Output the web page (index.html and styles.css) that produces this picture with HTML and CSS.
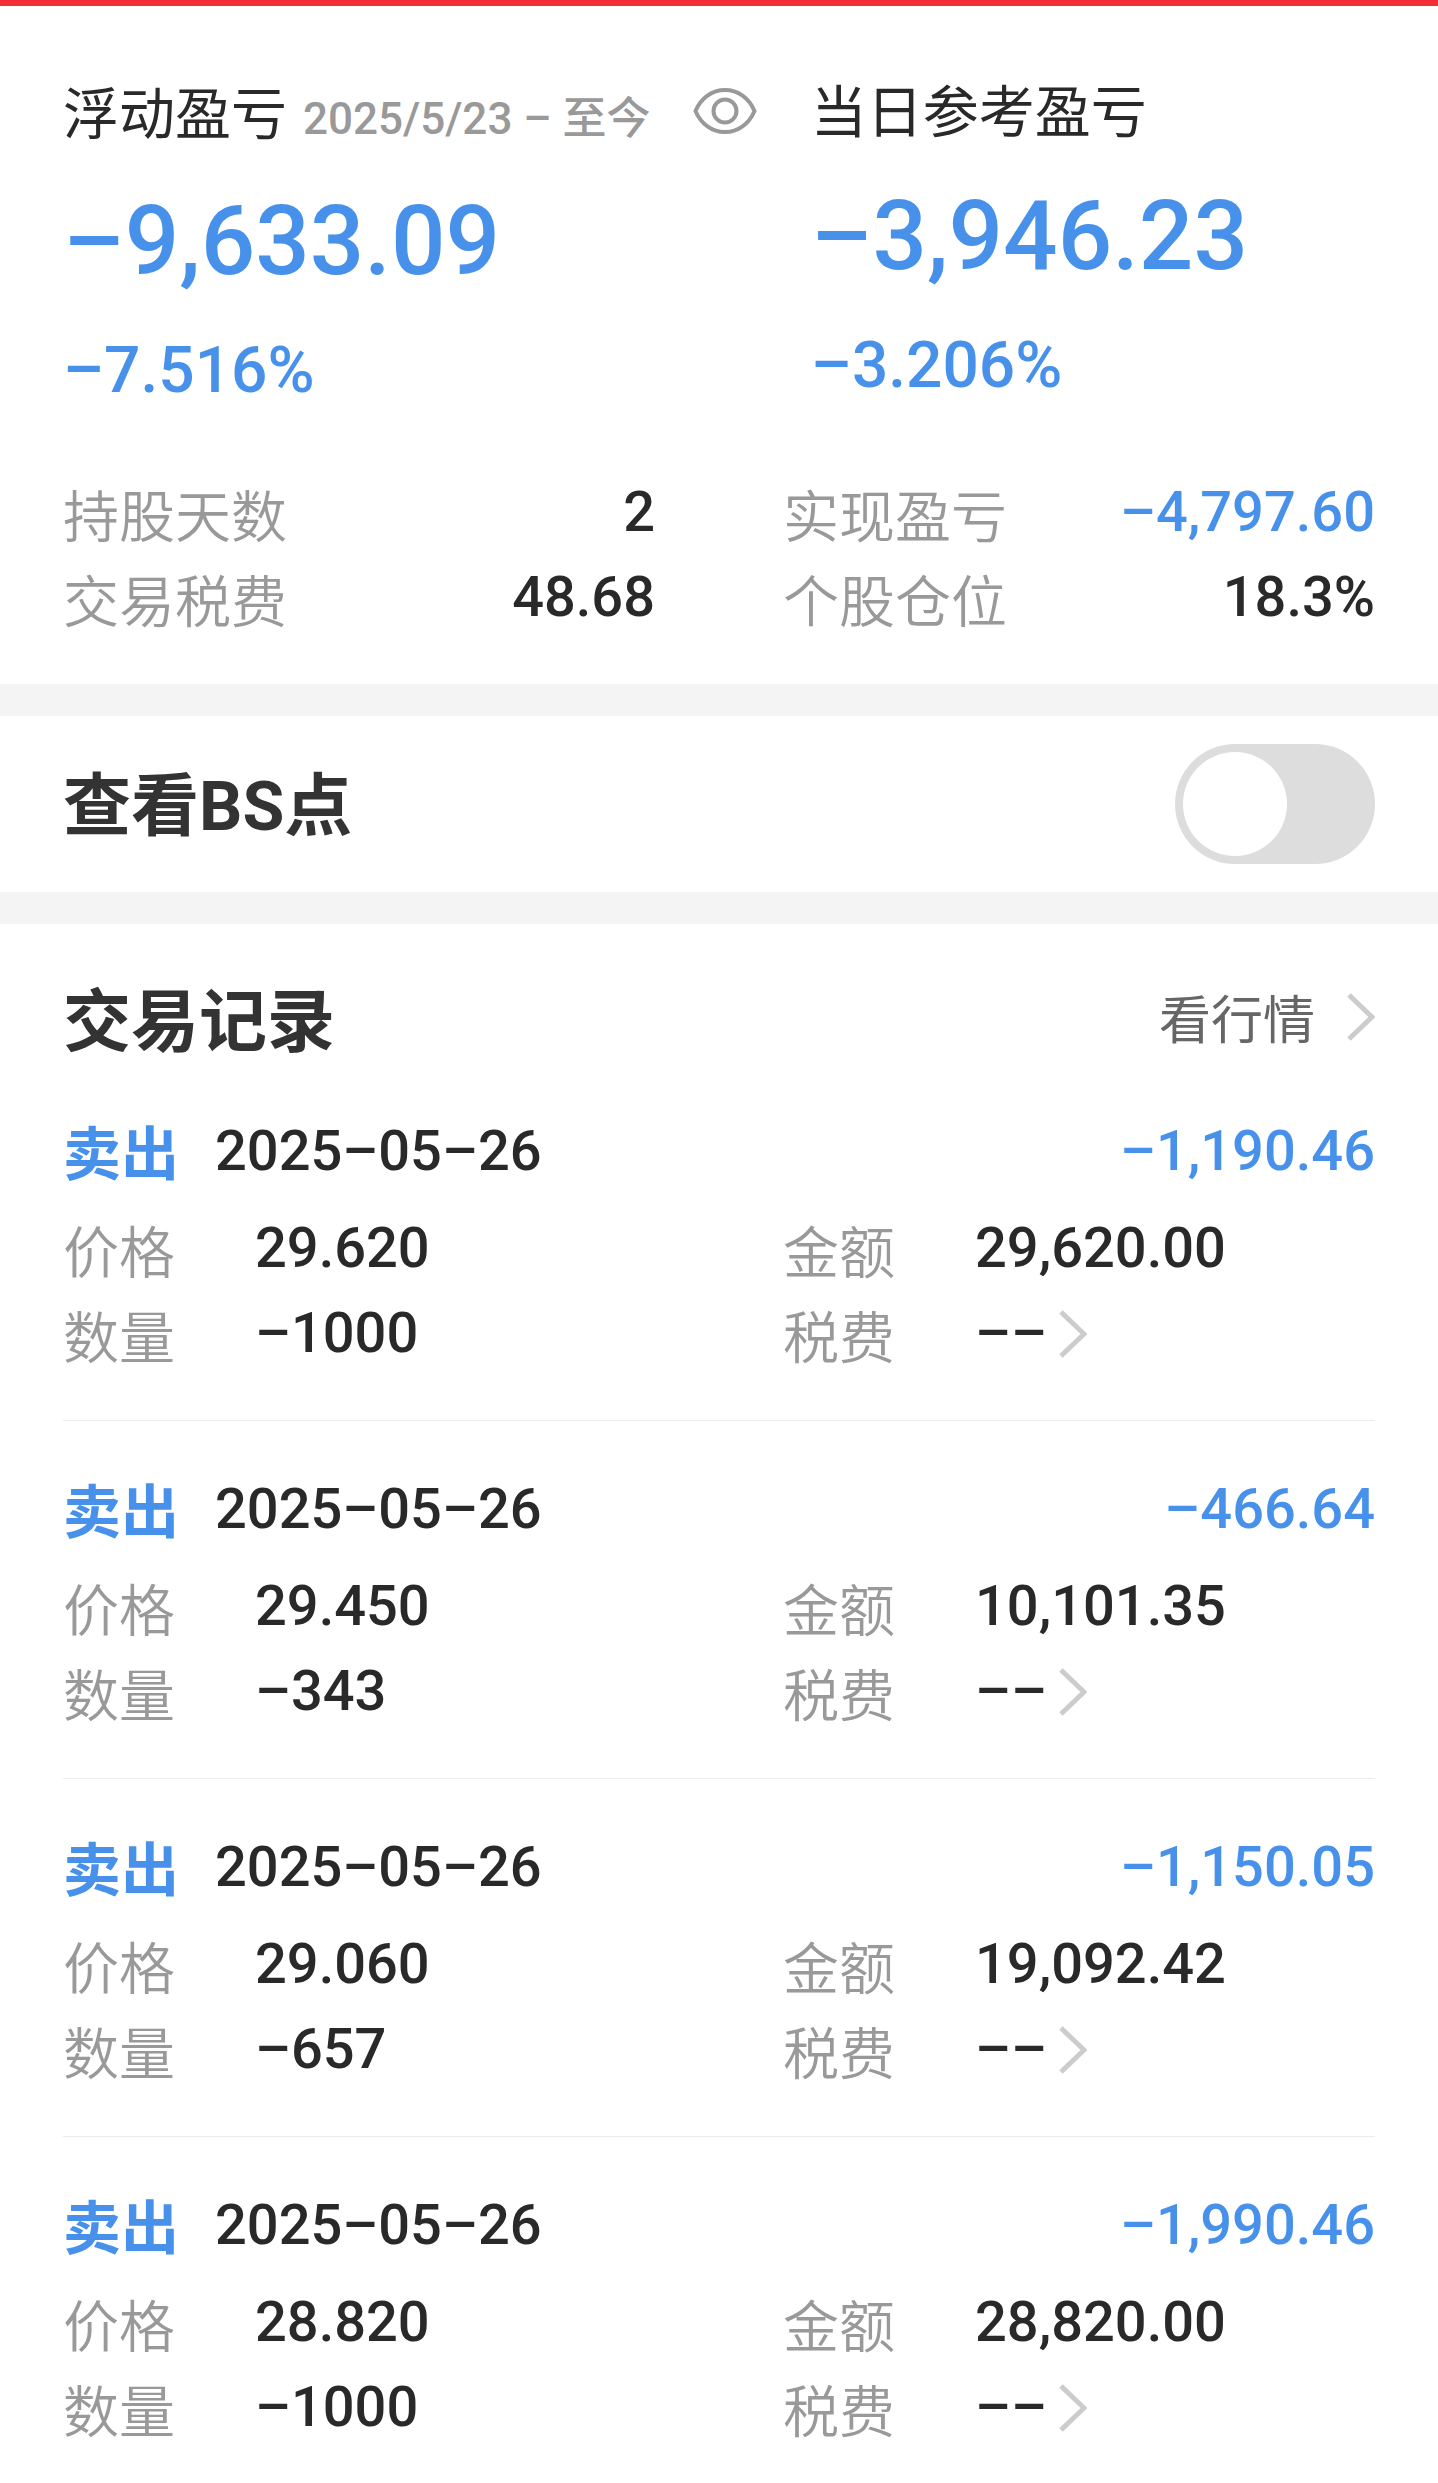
FILE: index.html
```html
<!DOCTYPE html>
<html lang="zh-CN">
<head>
  <meta charset="UTF-8" />
  <meta name="viewport" content="width=device-width, initial-scale=1.0" />
  <title>交易记录</title>
  <link rel="stylesheet" href="styles.css">
</head>
<body>
  <section class="summary">
    <div class="profits">
      <div class="profit">
        <div class="profit-title">
          <h2>浮动盈亏</h2>
          <span class="period">2025/5/23 – 至今</span>
          <button class="eye" type="button" aria-label="隐藏金额">
            <svg viewBox="0 0 64 48" width="64" height="48" fill="none" stroke="#999" stroke-width="4">
              <path d="M2.500 24C8 11 19 3 32 3s24 8 29.500 21C56 37 45 45 32 45S8 37 2.500 24z" />
              <circle cx="32" cy="24" r="11.500" />
            </svg>
          </button>
        </div>
        <p class="profit-value">–9,633.09</p>
        <p class="profit-rate">–7.516%</p>
      </div>
      <div class="profit today">
        <div class="profit-title">
          <h2>当日参考盈亏</h2>
        </div>
        <p class="profit-value">–3,946.23</p>
        <p class="profit-rate">–3.206%</p>
      </div>
    </div>
    <dl class="metrics">
      <div class="metric"><dt>持股天数</dt><dd>2</dd></div>
      <div class="metric"><dt>实现盈亏</dt><dd class="down">–4,797.60</dd></div>
      <div class="metric"><dt>交易税费</dt><dd>48.68</dd></div>
      <div class="metric"><dt>个股仓位</dt><dd>18.3%</dd></div>
    </dl>
  </section>

  <section class="bs-point">
    <label class="heading" for="bs-switch">查看<span class="latin">BS</span>点</label>
    <input class="switch" id="bs-switch" type="checkbox" role="switch">
  </section>

  <section class="records">
    <div class="records-header">
      <h2 class="heading">交易记录</h2>
      <a class="quote-link" href="#">看行情
        <svg class="arrow" viewBox="0 0 28 48"><path d="M2 2l23 22L2 46" /></svg>
      </a>
    </div>

    <article class="record">
      <div class="record-head">
        <span class="side">卖出</span>
        <time datetime="2025-05-26">2025–05–26</time>
        <span class="amount">–1,190.46</span>
      </div>
      <dl class="details">
        <div class="detail"><dt>价格</dt><dd>29.620</dd></div>
        <div class="detail"><dt>金额</dt><dd>29,620.00</dd></div>
        <div class="detail"><dt>数量</dt><dd>–1000</dd></div>
        <div class="detail"><dt>税费</dt><dd>––</dd>
          <button class="more" type="button" aria-label="税费明细"><svg class="arrow" viewBox="0 0 28 48"><path d="M2 2l23 22L2 46" /></svg></button>
        </div>
      </dl>
    </article>

    <article class="record">
      <div class="record-head">
        <span class="side">卖出</span>
        <time datetime="2025-05-26">2025–05–26</time>
        <span class="amount">–466.64</span>
      </div>
      <dl class="details">
        <div class="detail"><dt>价格</dt><dd>29.450</dd></div>
        <div class="detail"><dt>金额</dt><dd>10,101.35</dd></div>
        <div class="detail"><dt>数量</dt><dd>–343</dd></div>
        <div class="detail"><dt>税费</dt><dd>––</dd>
          <button class="more" type="button" aria-label="税费明细"><svg class="arrow" viewBox="0 0 28 48"><path d="M2 2l23 22L2 46" /></svg></button>
        </div>
      </dl>
    </article>

    <article class="record">
      <div class="record-head">
        <span class="side">卖出</span>
        <time datetime="2025-05-26">2025–05–26</time>
        <span class="amount">–1,150.05</span>
      </div>
      <dl class="details">
        <div class="detail"><dt>价格</dt><dd>29.060</dd></div>
        <div class="detail"><dt>金额</dt><dd>19,092.42</dd></div>
        <div class="detail"><dt>数量</dt><dd>–657</dd></div>
        <div class="detail"><dt>税费</dt><dd>––</dd>
          <button class="more" type="button" aria-label="税费明细"><svg class="arrow" viewBox="0 0 28 48"><path d="M2 2l23 22L2 46" /></svg></button>
        </div>
      </dl>
    </article>

    <article class="record">
      <div class="record-head">
        <span class="side">卖出</span>
        <time datetime="2025-05-26">2025–05–26</time>
        <span class="amount">–1,990.46</span>
      </div>
      <dl class="details">
        <div class="detail"><dt>价格</dt><dd>28.820</dd></div>
        <div class="detail"><dt>金额</dt><dd>28,820.00</dd></div>
        <div class="detail"><dt>数量</dt><dd>–1000</dd></div>
        <div class="detail"><dt>税费</dt><dd>––</dd>
          <button class="more" type="button" aria-label="税费明细"><svg class="arrow" viewBox="0 0 28 48"><path d="M2 2l23 22L2 46" /></svg></button>
        </div>
      </dl>
    </article>
  </section>
</body>
</html>
```

FILE: styles.css
```css
* {
  box-sizing: border-box;
}
body {
  margin: 0;
  font-family: "Noto Sans CJK SC", sans-serif;
  font-size: 56px;
  color: #292929;
  background: #fff;
  border-top: 6px solid #f12e38;
}
h2, p, dl, dd {
  margin: 0;
}
button {
  padding: 0;
  border: 0;
  background: none;
  cursor: pointer;
}
section {
  padding: 0 63px;
}
.heading {
  font-size: 68px;
  font-weight: bold;
  line-height: 92px;
  color: #333;
}
.period, .profit-value, .profit-rate, dd, time, .amount, .latin {
  font-family: Roboto, "Noto Sans CJK SC", sans-serif;
}
.period, .profit-value, .profit-rate, dd, time, .amount {
  font-weight: 500;
}

/* profit summary */
.summary {
  padding-top: 66px;
  padding-bottom: 44px;
}
.profits {
  display: grid;
  grid-template-columns: 57% 43%;
}
.profit-title {
  display: flex;
  align-items: baseline;
  line-height: 76px;
  white-space: nowrap;
}
.today .profit-title {
  line-height: 72px;
}
.profit-title h2 {
  font-size: 56px;
  font-weight: normal;
}
.period {
  margin-left: 16px;
  font-size: 44px;
  line-height: 60px;
  color: #999;
}
.eye {
  display: flex;
  align-self: center;
  margin-left: auto;
  margin-right: 54px;
}
.profit-value {
  margin-top: 32px;
  font-size: 96px;
  line-height: 120px;
  color: #4791eb;
}
.profit-rate {
  margin-top: 30px;
  font-size: 64px;
  line-height: 80px;
  color: #4791eb;
}

/* label and value pairs */
.metrics, .details {
  display: grid;
  grid-template-columns: 1fr 1fr;
  column-gap: 128px;
}
.metrics {
  margin-top: 59px;
}
.metric, .detail {
  display: flex;
  align-items: flex-start;
  line-height: 85px;
}
.metric {
  justify-content: space-between;
}
dt {
  font-weight: 350;
  color: #999;
}
.down {
  color: #4791eb;
}

/* BS switch */
.bs-point {
  display: flex;
  align-items: center;
  justify-content: space-between;
  height: 240px;
  border: solid #f4f4f4;
  border-width: 32px 0;
}
.switch {
  appearance: none;
  width: 200px;
  height: 120px;
  margin: 0;
  padding: 8px;
  border-radius: 60px;
  background: #ddd;
  cursor: pointer;
}
.switch::before {
  content: "";
  display: block;
  width: 104px;
  height: 104px;
  border-radius: 50%;
  background: #fff;
}
.switch:checked {
  background: #4791eb;
}
.switch:checked::before {
  margin-left: auto;
}

/* trade records */
.records-header {
  display: flex;
  align-items: center;
  justify-content: space-between;
  padding-top: 47px;
}
.quote-link {
  display: flex;
  align-items: center;
  gap: 32px;
  font-size: 52px;
  line-height: 84px;
  color: #666;
  text-decoration: none;
}
.arrow {
  display: block;
  width: 28px;
  height: 48px;
  fill: none;
  stroke: #ccc;
  stroke-width: 5;
}
.record {
  padding: 46px 0 44px;
  border-bottom: 1px solid #ececec;
}
.record:last-child {
  padding-bottom: 33px;
  border-bottom: 0;
}
.record-head {
  display: flex;
  align-items: flex-start;
  margin-bottom: 12px;
  line-height: 85px;
}
.side {
  margin-right: 36px;
  font-size: 58px;
  font-weight: bold;
  line-height: 82px;
  color: #4791eb;
}
.amount {
  margin-left: auto;
  color: #4791eb;
}
.detail dt {
  width: 192px;
}
.more {
  align-self: center;
  margin-left: 12px;
}
```
